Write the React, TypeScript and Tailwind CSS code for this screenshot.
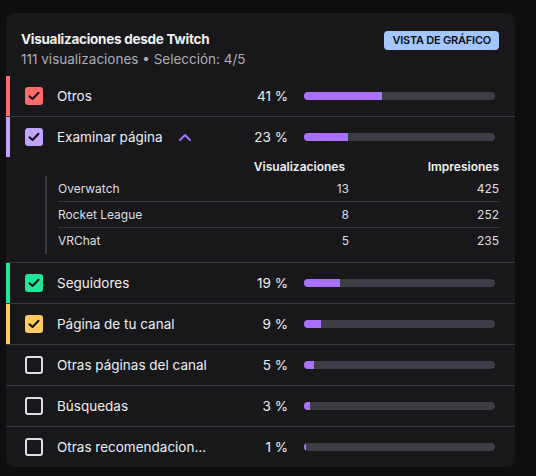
import React from 'react';

type Source = {
  label: string;
  pct: number;
  color?: string;
  bar?: string;
  expanded?: boolean;
};

const sources: Source[] = [
  { label: 'Otros', pct: 41, color: 'bg-[#ff6b6b]', bar: 'border-[#ff6b6b]' },
  { label: 'Examinar página', pct: 23, color: 'bg-[#c2a3ff]', bar: 'border-[#c2a3ff]', expanded: true },
  { label: 'Seguidores', pct: 19, color: 'bg-[#1ee897]', bar: 'border-[#1ee897]' },
  { label: 'Página de tu canal', pct: 9, color: 'bg-[#ffca5f]', bar: 'border-[#ffca5f]' },
  { label: 'Otras páginas del canal', pct: 5 },
  { label: 'Búsquedas', pct: 3 },
  { label: 'Otras recomendaciones', pct: 1 },
];

const games = [
  { name: 'Overwatch', views: 13, imp: 425 },
  { name: 'Rocket League', views: 8, imp: 252 },
  { name: 'VRChat', views: 5, imp: 235 },
];

const Check = () => (
  <svg width="12" height="10" viewBox="0 0 12 10" fill="none">
    <path d="M1.5 5.2 L4.5 8 L10.5 1.8" stroke="#0e0e10" strokeWidth="2" strokeLinecap="round" strokeLinejoin="round" />
  </svg>
);

const Checkbox = ({ color }: { color?: string }) =>
  color ? (
    <div className={`w-[18px] h-[18px] rounded-[3px] flex items-center justify-center shrink-0 ${color}`}>
      <Check />
    </div>
  ) : (
    <div className="w-[18px] h-[18px] rounded-[3px] border-2 border-[#dedee3] shrink-0" />
  );

const Row = ({ s }: { s: Source }) => (
  <div className={`flex items-center h-10 pl-[15px] pr-5 border-l-4 ${s.bar ?? 'border-transparent'}`}>
    <Checkbox color={s.color} />
    <div className="ml-[14px] w-[152px] flex items-center text-[13.5px] text-[#efeff1]">
      <span className="truncate">{s.label}</span>
      {s.expanded && (
        <svg className="ml-[15px] shrink-0" width="14" height="9" viewBox="0 0 14 9" fill="none">
          <path d="M2 7 L7 2 L12 7" stroke="#a970ff" strokeWidth="2" strokeLinecap="round" strokeLinejoin="round" />
        </svg>
      )}
    </div>
    <div className="w-[79px] text-right text-[13.5px] text-[#efeff1]">{s.pct} %</div>
    <div className="ml-4 w-[191px] h-2 rounded-full bg-[#3d3d45] overflow-hidden">
      <div className="h-full bg-[#a970ff]" style={{ width: `${s.pct}%` }} />
    </div>
  </div>
);

const Breakdown = () => (
  <div className="pr-4 pb-2 border-b border-[#35353b]">
    <div className="flex items-center h-[19px] pl-[52px] text-[12px] font-semibold text-[#efeff1]">
      <div className="flex-1" />
      <div className="w-[100px] text-right pr-1">Visualizaciones</div>
      <div className="w-[150px] text-right">Impresiones</div>
    </div>
    <div className="ml-[39px] border-l-2 border-[#3a3a40] pl-[11px]">
      {games.map((g, i) => (
        <div
          key={g.name}
          className={`flex items-center h-[26px] text-[12px] text-[#dedee3] ${i < games.length - 1 ? 'border-b border-[#35353b]' : ''}`}
        >
          <div className="flex-1">{g.name}</div>
          <div className="w-[100px] text-right">{g.views}</div>
          <div className="w-[150px] text-right">{g.imp}</div>
        </div>
      ))}
    </div>
  </div>
);

export default function App() {
  return (
    <div className="w-[536px] h-[476px] bg-[#0e0e10] pl-[6px] pt-[13px] font-['Inter',sans-serif]">
      <div className="w-[509px] rounded-lg bg-[#18181b] overflow-hidden">
        <div className="flex justify-between pl-[15px] pr-4 pt-[17px] pb-[7px]">
          <div>
            <h2 className="text-[13.5px] font-bold tracking-[-0.02em] text-[#efeff1] leading-[19px]">Visualizaciones desde Twitch</h2>
            <p className="text-[13.5px] text-[#adadb8] leading-[20px]">111 visualizaciones • Selección: 4/5</p>
          </div>
          <span className="mt-[1px] h-[19px] px-2 rounded-[4px] bg-[#a4c6ff] text-[#0e0e10] text-[11px] font-semibold tracking-[-0.02em] leading-[19px]">
            VISTA DE GRÁFICO
          </span>
        </div>
        {sources.map((s, i) => (
          <div key={s.label} className={i < sources.length - 1 && !s.expanded ? 'border-b border-[#35353b]' : ''}>
            <Row s={s} />
            {s.expanded && <Breakdown />}
          </div>
        ))}
      </div>
    </div>
  );
}
